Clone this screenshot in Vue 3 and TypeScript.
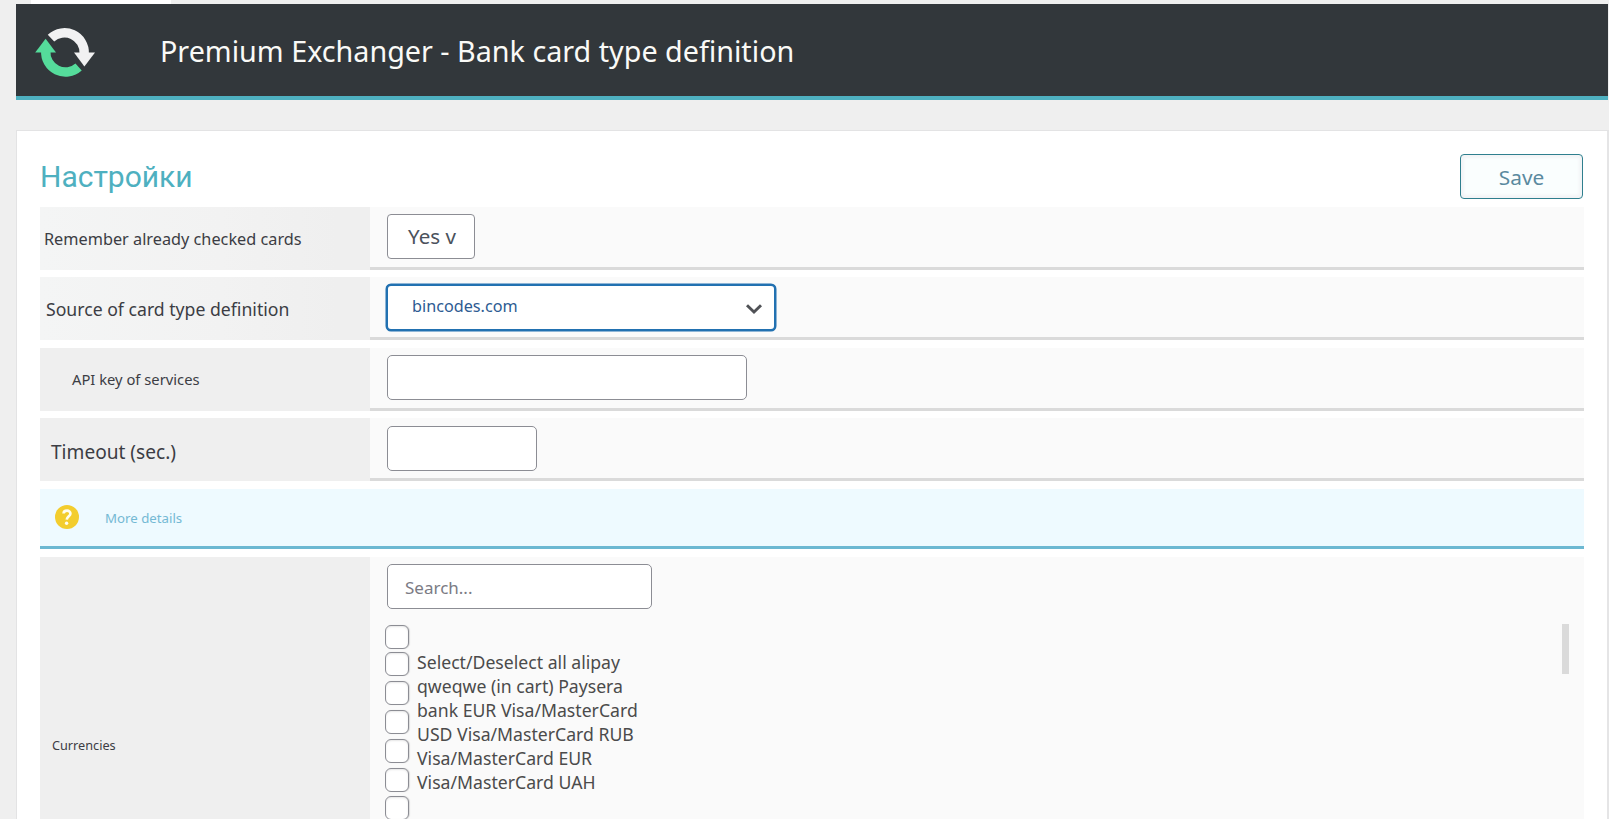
<script setup lang="ts">
import { ref } from 'vue'

const apiKey = ref('')
const timeout = ref('')
const query = ref('')
const boxes = ref<boolean[]>(Array.from({ length: 7 }, () => false))
const currencyLines: string[] = [
  'Select/Deselect all alipay',
  'qweqwe (in cart) Paysera',
  'bank EUR Visa/MasterCard',
  'USD Visa/MasterCard RUB',
  'Visa/MasterCard EUR',
  'Visa/MasterCard UAH',
]
</script>

<template>
  <div class="page">
    <div class="tab"></div>
    <header class="header">
      <svg class="logo" viewBox="0 0 62 52" width="62" height="52">
        <path d="M17 12.2A19.7 19.7 0 0 1 50.2 27.5" fill="none" stroke="#f1f1f2" stroke-width="9.4" />
        <path d="M40 26.5H61L50.4 40.4Z" fill="#f1f1f2" />
        <path d="M11.8 25A19.7 19.7 0 0 0 44.6 41" fill="none" stroke="#55dc9b" stroke-width="9.4" />
        <path d="M1.2 26.5H22L11.6 12.8Z" fill="#55dc9b" />
      </svg>
      <h1 class="title">Premium Exchanger - Bank card type definition</h1>
    </header>

    <main class="panel">
      <div class="panel-head">
        <h2 class="heading">Настройки</h2>
        <button class="save" type="button">Save</button>
      </div>

      <div class="row">
        <div class="label remember"><span>Remember already checked cards</span></div>
        <div class="cell"><div class="field yes">Yes v</div></div>
      </div>
      <div class="row source-row">
        <div class="label source"><span>Source of card type definition</span></div>
        <div class="cell source-cell">
          <div class="select">
            <span>bincodes.com</span>
            <svg viewBox="0 0 18 12" width="18" height="12">
              <path d="M2 2.2L9 9L16 2.2" fill="none" stroke="#505256" stroke-width="2.9" />
            </svg>
          </div>
        </div>
      </div>
      <div class="row api-row">
        <div class="label api"><span>API key of services</span></div>
        <div class="cell"><input v-model="apiKey" class="field key" type="text" /></div>
      </div>
      <div class="row timeout-row">
        <div class="label timeout"><span>Timeout (sec.)</span></div>
        <div class="cell timeout-cell"><input v-model="timeout" class="field seconds" type="text" /></div>
      </div>

      <div class="info">
        <svg viewBox="0 0 24 24" width="24" height="24">
          <circle cx="12" cy="12" r="12" fill="#f3cd2e" />
          <path d="M8.6 8.5C8.7 4.7 15.6 4.7 15.4 8.7C15.3 11.2 12 11.2 11.7 14.6" fill="none" stroke="#fffdf0" stroke-width="2.7" />
          <circle cx="11.6" cy="18.3" r="1.7" fill="#fffdf0" />
        </svg>
        <a class="more">More details</a>
      </div>

      <div class="row currencies-row">
        <div class="label currencies"><span>Currencies</span></div>
        <div class="cell currencies-cell">
          <input v-model="query" class="field search" type="text" placeholder="Search..." />
          <div class="list">
            <div class="checks">
              <input v-for="(_, i) in boxes" :key="i" v-model="boxes[i]" type="checkbox" class="check" />
            </div>
            <div class="lines">
              <div v-for="line in currencyLines" :key="line">{{ line }}</div>
            </div>
            <div class="thumb"></div>
          </div>
        </div>
      </div>
    </main>
  </div>
</template>

<style>
body {
  background: #efefef;
  overflow: hidden;
}
</style>

<style scoped>
* {
  box-sizing: border-box;
}
.page {
  width: 1609px;
  height: 819px;
  overflow: hidden;
  background: #efefef;
  padding-left: 16px;
  font-family: 'Noto Sans', sans-serif;
  color: #3c3d44;
}
.tab {
  width: 140px;
  height: 4px;
  margin-left: 15px;
  background: #fff;
}
.header {
  display: flex;
  align-items: center;
  width: 1592px;
  height: 96px;
  padding-left: 18px;
  background: #32373b;
  border-bottom: 4px solid #4eb0c0;
}
.logo {
  flex: none;
  margin-top: 3px;
}
.title {
  margin: 2px 0 0 64px;
  font-size: 28.72px;
  font-weight: 400;
  line-height: 40px;
  white-space: nowrap;
  color: #fafaf7;
}
.panel {
  width: 1593px;
  height: 900px;
  margin-top: 30px;
  padding: 23px 23px 0;
  background: #fff;
  border: 1px solid #e3e3e4;
  border-right: 2px solid #e5e5e6;
}
.panel-head {
  display: flex;
  justify-content: space-between;
  width: 1543px;
  height: 53px;
}
.heading {
  margin: 1px 0 0;
  font-family: Roboto, sans-serif;
  font-size: 30px;
  font-weight: 400;
  line-height: 44px;
  color: #4eb0c0;
}
.save {
  width: 123px;
  height: 45px;
  padding: 0;
  font-family: inherit;
  font-size: 20.8px;
  color: #5a8a9f;
  background: #fafefe;
  border: 1px solid #2f7f8e;
  border-radius: 4px;
  box-shadow: inset 0 0 3px 3px #f3f4f6;
}
.row {
  display: flex;
  width: 1544px;
  height: 63px;
}
.source-row,
.timeout-row {
  margin-top: 7px;
}
.api-row,
.info,
.currencies-row {
  margin-top: 8px;
}
.label {
  display: flex;
  align-items: center;
  flex: none;
  width: 330px;
  background: #efefef;
  white-space: nowrap;
}
.remember,
.source {
  background: linear-gradient(90deg, #f4f5f5, #f2f2f2 55%, #efefef 90%);
}
.remember {
  padding-left: 4px;
  font-size: 16.27px;
}
.source {
  padding: 1px 0 0 6px;
  font-size: 17.65px;
}
.api {
  padding: 0 0 1px 32px;
  font-size: 14.75px;
}
.timeout {
  padding: 4px 0 0 11px;
  font-size: 19.1px;
}
.currencies {
  padding-left: 12px;
  font-size: 12.7px;
}
.cell {
  flex: 1;
  padding: 7px 0 0 17px;
  background: #fafafa;
  border-bottom: 3px solid #dadada;
}
.source-cell {
  padding: 7px 0 0 16px;
}
.timeout-cell {
  padding-top: 8px;
}
.field {
  display: block;
  height: 45px;
  padding: 0 18px;
  font-family: inherit;
  background: #fff;
  border: 1px solid #8c8d94;
  border-radius: 5px;
  outline: none;
}
.yes {
  width: 88px;
  padding: 0 0 0 20px;
  font-size: 20.6px;
  line-height: 43px;
  white-space: nowrap;
  color: #4b525c;
  border-radius: 4px;
}
.select {
  display: flex;
  align-items: center;
  justify-content: space-between;
  width: 390px;
  height: 47px;
  padding: 0 11px 0 24px;
  font-size: 16.2px;
  color: #2d5b92;
  background: #fff;
  border: 2px solid #2271b1;
  border-radius: 5px;
  box-shadow: 0 0 0 0.5px #2271b1;
}
.select span {
  margin-top: -3px;
}
.select svg {
  margin-top: 2px;
}
.key {
  width: 360px;
}
.seconds {
  width: 150px;
}
.info {
  display: flex;
  align-items: center;
  width: 1544px;
  height: 60px;
  padding: 0 0 2px 15px;
  background: #eefaff;
  border-bottom: 3px solid #6cb8d2;
}
.more {
  margin: 2px 0 0 26px;
  font-size: 13.25px;
  color: #74b9d4;
}
.currencies-row {
  height: 376px;
}
.search {
  width: 265px;
  padding: 2px 17px 0;
  font-size: 17px;
}
.search::placeholder {
  color: #7b7b84;
}
.list {
  display: flex;
  padding-top: 15px;
}
.checks {
  display: flex;
  flex-direction: column;
  gap: 5px;
  width: 24px;
  margin: 1px 0 0 -2px;
}
.check {
  appearance: none;
  flex: none;
  width: 24px;
  height: 24px;
  margin: 0;
  background: #fff;
  border: 1px solid #8c8d94;
  border-radius: 6px;
  box-shadow: inset 0 1px 2px rgba(0, 0, 0, 0.1), 1px 0 1px rgba(0, 0, 0, 0.12);
}
.check:first-child {
  margin-bottom: -2px;
}
.check:last-child {
  margin-top: -1px;
}
.lines {
  padding: 26px 0 0 8px;
  font-size: 17.65px;
  line-height: 24px;
  white-space: nowrap;
  color: #4b4b4b;
}
.thumb {
  width: 7px;
  height: 50px;
  margin: 0 15px 0 auto;
  background: #dadada;
}
</style>
